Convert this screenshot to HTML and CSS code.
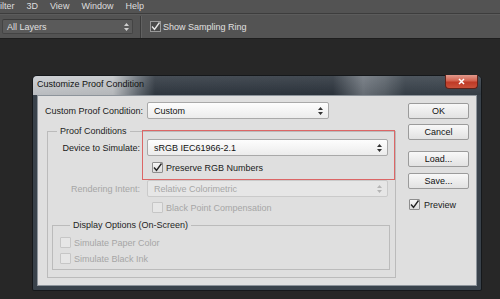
FILE: index.html
```html
<!DOCTYPE html>
<html>
<head>
<meta charset="utf-8">
<link rel="stylesheet" href="styles.css">
</head>
<body>
<div class="menubar"><span>ilter</span><span>3D</span><span>View</span><span>Window</span><span>Help</span></div>
<div class="optbar">
  <div class="osel"><span>All Layers</span><svg class="arr" width="5" height="8" viewBox="0 0 5 8"><path d="M2.5 0L5 3H0zM2.5 8L0 5h5z" fill="#cfcfcf"/></svg></div>
  <div class="osep"></div>
  <div class="ocheck"><span class="obox"><svg width="11" height="11" viewBox="0 0 11 11"><path d="M2 5.5l2.5 2.8L9.5 1.5" fill="none" stroke="#e6e6e6" stroke-width="1.4"/></svg></span><span>Show Sampling Ring</span></div>
</div>
<div class="dialog">
  <div class="titlebar">
    <span class="title">Customize Proof Condition</span>
    <div class="close"><svg width="7" height="7" viewBox="0 0 7 7"><path d="M1 1l5 5M6 1L1 6" stroke="#fff" stroke-width="1.5"/></svg></div>
  </div>
  <div class="client">
    <div class="main">
      <div class="row top">
        <span class="lbl">Custom Proof Condition:</span>
        <div class="select w182"><span>Custom</span><svg class="arr" width="5" height="8" viewBox="0 0 5 8"><path d="M2.5 0L5 3H0zM2.5 8L0 5h5z" fill="#333"/></svg></div>
      </div>
      <fieldset class="group proof">
        <legend>Proof Conditions</legend>
        <div class="highlight">
          <div class="row">
            <span class="lbl right">Device to Simulate:</span>
            <div class="select wide"><span>sRGB IEC61966-2.1</span><svg class="arr" width="5" height="8" viewBox="0 0 5 8"><path d="M2.5 0L5 3H0zM2.5 8L0 5h5z" fill="#333"/></svg></div>
          </div>
          <div class="check indent first"><span class="box"><svg width="11" height="11" viewBox="0 0 11 11"><path d="M2 5.5l2.5 2.8L9.5 1.5" fill="none" stroke="#222" stroke-width="1.4"/></svg></span><span>Preserve RGB Numbers</span></div>
        </div>
        <div class="row disabled gap7">
          <span class="lbl right">Rendering Intent:</span>
          <div class="select wide"><span>Relative Colorimetric</span><svg class="arr" width="5" height="8" viewBox="0 0 5 8"><path d="M2.5 0L5 3H0zM2.5 8L0 5h5z" fill="#b5b5b5"/></svg></div>
        </div>
        <div class="check indent disabled gap5"><span class="box"></span><span>Black Point Compensation</span></div>
        <fieldset class="group display">
          <legend>Display Options (On-Screen)</legend>
          <div class="check disabled first"><span class="box"></span><span>Simulate Paper Color</span></div>
          <div class="check disabled gap5"><span class="box"></span><span>Simulate Black Ink</span></div>
        </fieldset>
      </fieldset>
    </div>
    <div class="side">
      <div class="btn ok">OK</div>
      <div class="btn cancel">Cancel</div>
      <div class="btn load">Load...</div>
      <div class="btn save">Save...</div>
      <div class="check preview"><span class="box"><svg width="11" height="11" viewBox="0 0 11 11"><path d="M2 5.5l2.5 2.8L9.5 1.5" fill="none" stroke="#222" stroke-width="1.4"/></svg></span><span>Preview</span></div>
    </div>
  </div>
</div>
</body>
</html>
```
FILE: styles.css
```css
* { box-sizing: border-box; }
body {
  margin: 0;
  width: 500px;
  height: 299px;
  overflow: hidden;
  background: #272727;
  font-family: "Liberation Sans", Arial, sans-serif;
  font-size: 9px;
  color: #1a1a1a;
}
.menubar {
  height: 14px;
  background: #535353;
  border-bottom: 1px solid #3d3d3d;
  display: flex;
  gap: 12px;
  color: #dedede;
  font-size: 9px;
  line-height: 12px;
}
.optbar {
  height: 25px;
  background: #535353;
  border-top: 1px solid #5c5c5c;
  border-bottom: 1px solid #1e1e1e;
  display: flex;
  align-items: center;
  color: #e0e0e0;
}
.osel {
  margin-left: 2px;
  width: 131px;
  height: 15px;
  background: #5a5a5a;
  border: 1px solid #444;
  border-top-color: #3a3a3a;
  border-radius: 2px;
  display: flex;
  align-items: center;
  justify-content: space-between;
  padding: 0 3px 0 4px;
}
.osep {
  width: 1px;
  height: 22px;
  background: #3b3b3b;
  box-shadow: 1px 0 0 #616161;
  margin-left: 7px;
}
.ocheck {
  margin-left: 9px;
  display: flex;
  align-items: center;
}
.obox {
  width: 11px;
  height: 11px;
  border: 1px solid #9a9a9a;
  background: #4a4a4a;
  margin-right: 2px;
  display: flex;
}
.obox svg { margin: -1px; }

.dialog {
  margin: 36px 0 0 32px;
  width: 450px;
  height: 216px;
  background: #39424b;
  border: 1px solid #15181b;
  border-radius: 5px 5px 2px 2px;
  padding: 0 4px 4px;
  display: flex;
  flex-direction: column;
}
.titlebar {
  height: 19px;
  margin: 0 -4px;
  border-radius: 4px 4px 0 0;
  display: flex;
  align-items: flex-start;
  background:
    linear-gradient(180deg, rgba(255,255,255,0.10), rgba(0,0,0,0.08)),
    linear-gradient(90deg, #c9ccd0 0, #c3c6c9 80px, #6a727a 104px, #323a43 122px, #2e363f 300px, #6f767e 330px, #5b636b 352px, #3a434c 372px, #39424b 100%);
}
.title {
  padding-left: 4px;
  line-height: 17px;
  color: #111;
}
.close {
  margin-left: auto;
  margin-right: 3px;
  margin-top: -1px;
  width: 33px;
  height: 14px;
  border: 1px solid #5e2219;
  border-top: none;
  border-radius: 0 0 4px 4px;
  background: linear-gradient(180deg, #e29a8c 0, #d3624f 45%, #bf3a26 55%, #c9503a 100%);
  display: flex;
  align-items: center;
  justify-content: center;
}
.client {
  flex: 1;
  background: #dfdfdf;
  border: 1px solid #8d949b;
  padding: 6px 0 0 7px;
  display: grid;
  grid-template-columns: 352px 61px;
  column-gap: 11px;
  align-items: start;
}
.row {
  display: flex;
  align-items: center;
  height: 17px;
}
.lbl { width: 102px; white-space: nowrap; }
.lbl.right { width: 92px; text-align: right; margin-right: 7px; }
.select {
  height: 17px;
  background: linear-gradient(180deg, #fdfdfd, #ececec);
  border: 1px solid #a9a9a9;
  border-radius: 2px;
  display: flex;
  align-items: center;
  justify-content: space-between;
  padding: 0 5px 0 6px;
  color: #111;
}
.w182 { width: 182px; }
.wide { width: 241px; }
.group {
  margin: 0;
  padding: 0;
  border: 1px solid #bbbbbb;
  min-width: 0;
}
.group legend {
  padding: 0 3px;
  line-height: 12px;
  color: #1e1e1e;
}
.proof {
  margin: 6px 0 0 2px;
  width: 349px;
  padding-bottom: 7px;
}
.proof > legend { margin-left: 9px; }
.highlight {
  position: relative;
  margin-top: 2px;
}
.highlight::after {
  content: "";
  position: absolute;
  top: -9px;
  bottom: -7px;
  left: 94px;
  right: 0;
  border: 1px solid #dc6666;
}
.check {
  display: flex;
  align-items: center;
  height: 11px;
}
.check .box {
  width: 11px;
  height: 11px;
  border: 1px solid #8e8e8e;
  border-radius: 1px;
  background: linear-gradient(180deg, #f6f6f6, #dcdcdc);
  margin-right: 3px;
  display: flex;
  flex: none;
}
.check .box svg { margin: -1px; }
.indent { padding-left: 104px; }
.first { margin-top: 6px; }
.gap5 { margin-top: 5px; }
.gap7 { margin-top: 7px; }
.disabled { color: #a6a6a6; }
.disabled .select {
  background: #e6e6e6;
  border-color: #cacaca;
  color: #a6a6a6;
}
.check.disabled .box {
  border-color: #c6c6c6;
  background: #e6e6e6;
}
.display {
  margin: 6px 0 0 4px;
  width: 338px;
  padding: 0 0 5px 7px;
}
.display > legend { margin-left: 10px; }
.side { display: flex; flex-direction: column; }
.btn {
  width: 61px;
  height: 16px;
  border: 1px solid #9b9b9b;
  border-radius: 2px;
  background: linear-gradient(180deg, #f8f8f8, #e2e2e2);
  text-align: center;
  line-height: 14px;
  color: #111;
}
.ok { margin-top: 1px; }
.cancel { margin-top: 5px; }
.load { margin-top: 11px; }
.save { margin-top: 6px; }
.preview { margin-top: 10px; padding-left: 1px; }
.preview .box { margin-right: 4px; }
```
